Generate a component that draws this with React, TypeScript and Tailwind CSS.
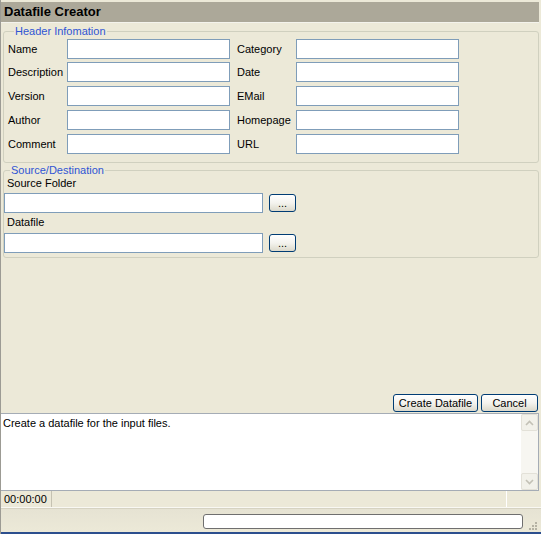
import React from "react";

const LEFT_ROWS = ["Name", "Description", "Version", "Author", "Comment"];
const RIGHT_ROWS = ["Category", "Date", "EMail", "Homepage", "URL"];

const inputCls = "h-[20px] bg-white border border-[#7f9db9] outline-none px-1 text-[11px]";
const btnCls =
  "h-[18px] rounded-[3px] border border-[#003c74] bg-gradient-to-b from-white via-[#f4f3ee] to-[#dcd9cb] text-[11px] leading-none text-black flex items-center justify-center";

function Chevron({ up }: { up?: boolean }) {
  return (
    <svg width="9" height="6" viewBox="0 0 9 6">
      <path
        d={up ? "M1 5 L4.5 1.5 L8 5" : "M1 1 L4.5 4.5 L8 1"}
        fill="none"
        stroke="#c3c1b6"
        strokeWidth="1.6"
      />
    </svg>
  );
}

export default function App() {
  return (
    <div
      className="w-[541px] h-[534px] bg-[#ece9d8] flex flex-col border-l border-[#9c9b94] overflow-hidden text-black text-[11px]"
      style={{ fontFamily: '"Liberation Sans", Arial, sans-serif' }}
    >
      {/* Title */}
      <div className="mt-[2px] mr-[2px] h-[21px] bg-[#aca899] flex items-center pl-[3px] font-bold text-[13px] border-b border-[#f4f3ec]">
        Datafile Creator
      </div>

      {/* Header Information */}
      <fieldset className="mt-[2px] ml-[2px] mr-[2px] border border-[#d0d0bf] rounded-[3px] pl-[4px] pb-[8px]">
        <legend className="ml-[6px] px-[1px] text-[#2f55d4] leading-[13px]">Header Infomation</legend>
        <div className="pt-[1px] flex flex-col">
          {LEFT_ROWS.map((l, i) => (
            <div key={l} className={`flex items-center ${i === 0 ? "" : i === 1 ? "mt-[3px]" : "mt-[4px]"}`}>
              <span className="w-[59px]">{l}</span>
              <input className={`${inputCls} w-[163px]`} />
              <span className="w-[59px] ml-[7px]">{RIGHT_ROWS[i]}</span>
              <input className={`${inputCls} w-[163px]`} />
            </div>
          ))}
        </div>
      </fieldset>

      {/* Source/Destination */}
      <fieldset className="mt-[1px] ml-[2px] mr-[2px] border border-[#d0d0bf] rounded-[3px] pb-[4px]">
        <legend className="ml-[6px] px-[1px] text-[#2f55d4] leading-[13px]">Source/Destination</legend>
        <div className="pl-[3px] leading-[13px]">Source Folder</div>
        <div className="mt-[3px] flex items-center">
          <input className={`${inputCls} w-[259px]`} />
          <button className={`${btnCls} w-[27px] ml-[6px]`}>...</button>
        </div>
        <div className="pl-[3px] mt-[3px] leading-[13px]">Datafile</div>
        <div className="mt-[4px] flex items-center">
          <input className={`${inputCls} w-[259px]`} />
          <button className={`${btnCls} w-[27px] ml-[6px]`}>...</button>
        </div>
      </fieldset>

      <div className="flex-1" />

      {/* Buttons */}
      <div className="flex justify-end gap-[3px] pr-[3px] mb-[1px]">
        <button className={`${btnCls} w-[85px]`}>Create Datafile</button>
        <button className={`${btnCls} w-[57px]`}>Cancel</button>
      </div>

      {/* Log */}
      <div className="h-[78px] mr-[2px] bg-white border border-l-0 border-[#a5acb5] flex">
        <div className="flex-1 pl-[2px] pt-[3px] leading-[13px]">Create a datafile for the input files.</div>
        <div className="w-[17px] bg-[#f7f6f1] flex flex-col justify-between">
          <div className="h-[17px] bg-[#f2f1ea] border border-[#e3e1d8] rounded-[2px] flex items-center justify-center">
            <Chevron up />
          </div>
          <div className="h-[17px] bg-[#f2f1ea] border border-[#e3e1d8] rounded-[2px] flex items-center justify-center">
            <Chevron />
          </div>
        </div>
      </div>

      {/* Status bar */}
      <div className="h-[17px] flex items-stretch border-b border-[#f9f8f3]">
        <div className="w-[51px] pl-[3px] flex items-center border-r border-[#c5c2b2]">00:00:00</div>
        <div className="w-[455px] border-r border-[#ffffff]" />
      </div>

      {/* Bottom bar */}
      <div className="h-[24px] bg-gradient-to-b from-[#e6e3d3] to-[#ece9d8] border-t border-[#d6d3c2] flex items-center justify-end">
        <div className="w-[320px] h-[15px] bg-white border border-[#6f6f6f] rounded-[3px] mt-[2px]" />
        <div className="w-[18px] h-[24px] flex items-end justify-center pb-[2px]">
          <svg width="11" height="11" viewBox="0 0 11 11">
            {[
              [8, 2],
              [5, 5],
              [8, 5],
              [2, 8],
              [5, 8],
              [8, 8],
            ].map(([x, y]) => (
              <rect key={`${x}-${y}`} x={x} y={y} width="2" height="2" fill="#b5b2a4" />
            ))}
          </svg>
        </div>
      </div>

      <div className="h-[2px] bg-[#2c4f8e]" />
    </div>
  );
}
